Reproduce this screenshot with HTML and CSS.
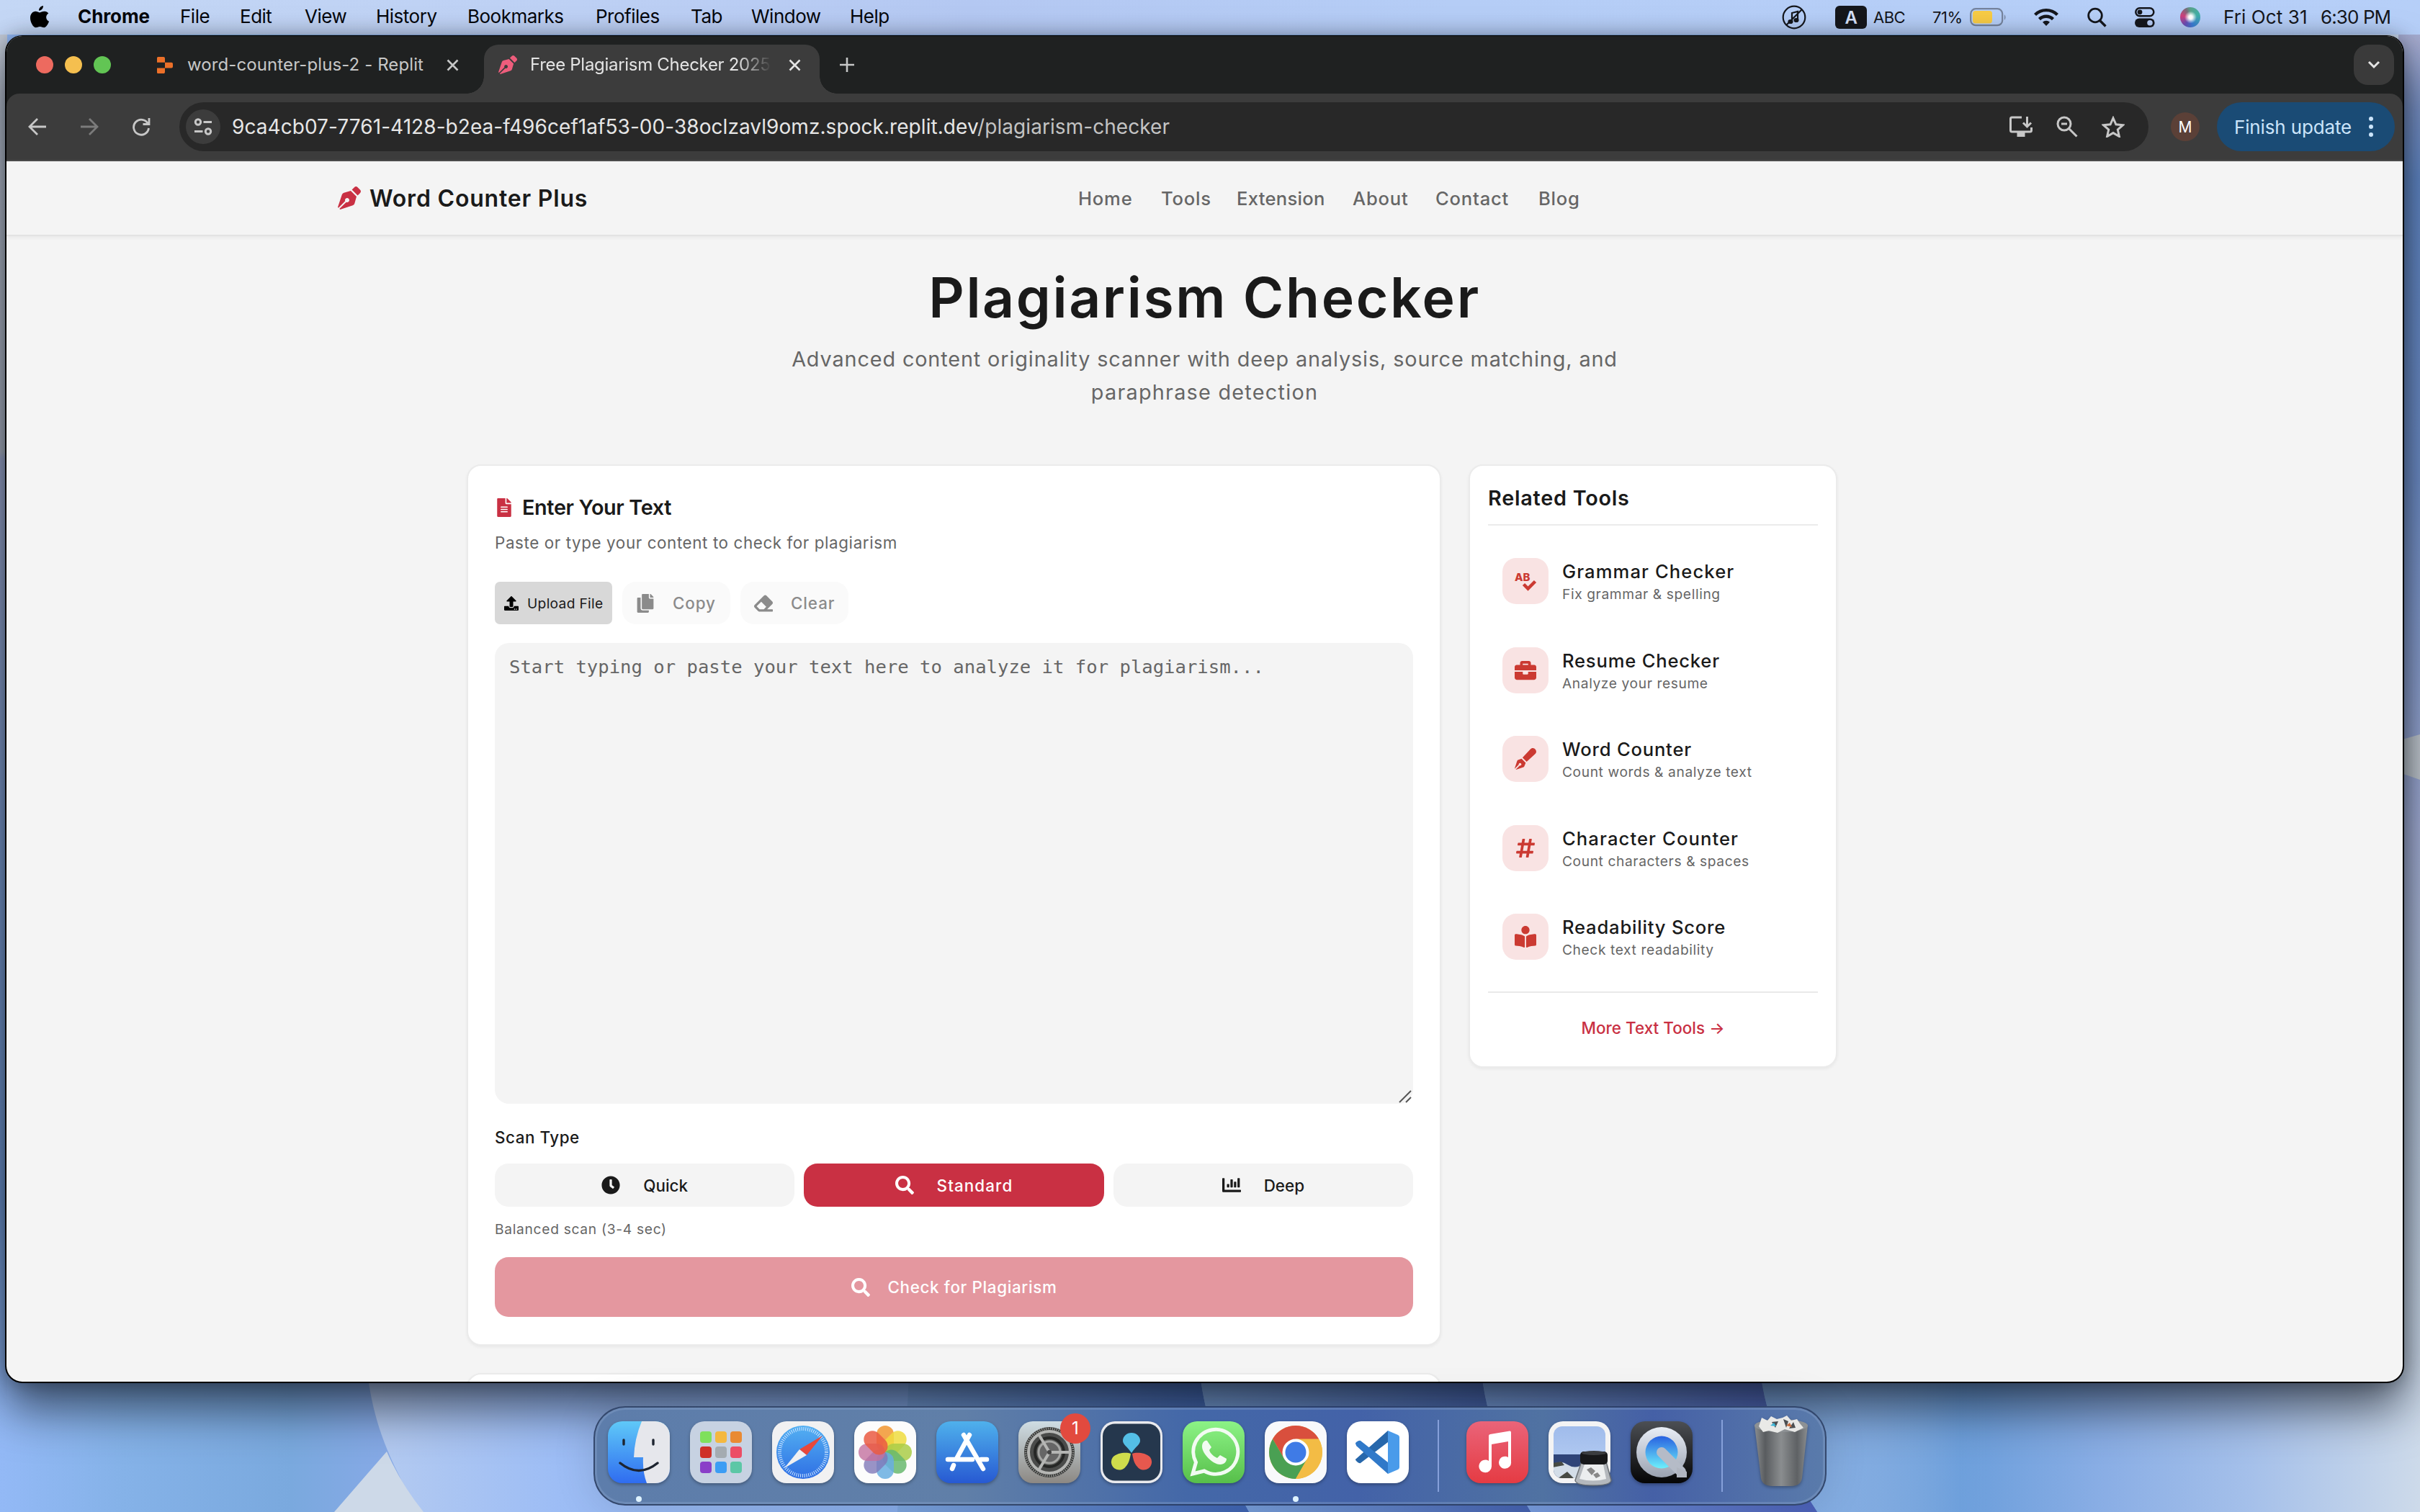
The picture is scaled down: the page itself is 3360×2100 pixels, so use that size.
FILE: index.html
```html
<!DOCTYPE html>
<html lang="en">
<head>
<meta charset="utf-8">
<title>Free Plagiarism Checker 2025</title>
<link rel="stylesheet" href="styles.css">
</head>
<body>
<svg class="defs" width="0" height="0">
<defs>
<symbol id="nib" viewBox="0 0 512 512"><path d="M136.6 138.79a64 64 0 0 0-43.31 41.35L0 460l14.69 14.69L164.8 324.58c-2.99-6.26-4.8-13.18-4.8-20.58 0-26.51 21.49-48 48-48s48 21.49 48 48-21.49 48-48 48c-7.4 0-14.32-1.81-20.58-4.8L37.31 497.31 52 512l279.86-93.29a64 64 0 0 0 41.35-43.31L416 224 288 96l-151.4 42.79zm361.34-64.62l-60.11-60.11c-18.75-18.75-49.16-18.75-67.91 0l-56.55 56.55 128.02 128.02 56.55-56.55c18.75-18.75 18.75-49.15 0-67.91z"/></symbol>
<symbol id="search" viewBox="0 0 512 512"><path d="M505 442.7L405.3 343c-4.5-4.5-10.600-7-17-7H372c27.600-35.300 44-79.700 44-128C416 93.100 322.900 0 208 0S0 93.100 0 208s93.100 208 208 208c48.300 0 92.700-16.400 128-44v16.300c0 6.400 2.500 12.500 7 17l99.700 99.700c9.400 9.400 24.600 9.400 33.900 0l28.300-28.300c9.400-9.400 9.400-24.600.1-34zM208 336c-70.700 0-128-57.200-128-128 0-70.700 57.200-128 128-128 70.700 0 128 57.200 128 128 0 70.700-57.200 128-128 128z"/></symbol>
</defs>
</svg>

<svg class="wallpaper" viewBox="0 0 3360 2100" preserveAspectRatio="none">
<defs>
<linearGradient id="wb" x1="0" x2="3360" y1="0" y2="0" gradientUnits="userSpaceOnUse">
<stop offset="0" stop-color="#93b9f6"/><stop offset=".05" stop-color="#85b2e8"/><stop offset=".12" stop-color="#7aa9de"/><stop offset=".16" stop-color="#86a9e6"/><stop offset=".76" stop-color="#86aee0"/><stop offset=".81" stop-color="#6b9edb"/><stop offset=".87" stop-color="#8aaee5"/><stop offset=".93" stop-color="#a5c0ea"/><stop offset="1" stop-color="#cddaea"/>
</linearGradient>
<linearGradient id="s1" x1="0" x2="1"><stop offset="0" stop-color="#b5cbf0"/><stop offset=".35" stop-color="#9dbdf5"/><stop offset="1" stop-color="#86abe8"/></linearGradient>
<linearGradient id="s2" x1="0" x2="1"><stop offset="0" stop-color="#7ba3dd"/><stop offset="1" stop-color="#3d62b0"/></linearGradient>
<linearGradient id="s3" x1="0" x2="1"><stop offset="0" stop-color="#7ea6de"/><stop offset="1" stop-color="#4360ae"/></linearGradient>
<linearGradient id="s4" x1="0" x2="1"><stop offset="0" stop-color="#7fa6e4"/><stop offset="1" stop-color="#4a5fb6"/></linearGradient>
<linearGradient id="s5" x1="0" x2="1"><stop offset="0" stop-color="#80aae3"/><stop offset="1" stop-color="#86aee0" stop-opacity="0"/></linearGradient>
<linearGradient id="le" x1="0" x2="0" y1="0" y2="1"><stop offset="0" stop-color="#c3cbd8"/><stop offset=".32" stop-color="#b3b9c6"/><stop offset=".325" stop-color="#a3add0"/><stop offset=".6" stop-color="#7f9fd4"/><stop offset=".85" stop-color="#6f96d0"/><stop offset="1" stop-color="#93b9f6"/></linearGradient>
<linearGradient id="re" x1="0" x2="0" y1="0" y2="1"><stop offset="0" stop-color="#a9b7e4"/><stop offset=".03" stop-color="#a3a9cd"/><stop offset=".08" stop-color="#7a93c8"/><stop offset=".13" stop-color="#6289c8"/><stop offset=".35" stop-color="#7090ca"/><stop offset=".6" stop-color="#a5b0d8"/><stop offset=".75" stop-color="#b0c0d6"/><stop offset=".93" stop-color="#c5d3e4"/><stop offset="1" stop-color="#cddaea"/></linearGradient>
</defs>
<rect width="3360" height="2100" fill="url(#wb)"/>
<rect width="10" height="1960" fill="url(#le)"/>
<rect x="3330" width="30" height="1910" fill="url(#re)"/>
<path d="M3300 1037L3360 1020V1083L3300 1062Z" fill="#c5ccd2"/>
<path d="M508 1880C512 1950 530 2020 590 2110H1265V1880Z" fill="url(#s1)"/>
<path d="M537 2016L464 2100H588Q556 2060 537 2016Z" fill="#cdd9e8"/>
<path d="M1262 1880C1262 1980 1250 2040 1245 2110H1740C1700 2040 1668 1970 1664 1880Z" fill="url(#s2)"/>
<path d="M1664 1880C1668 1970 1700 2040 1740 2110H2132C2086 2040 2060 1960 2054 1880Z" fill="url(#s3)"/>
<path d="M2054 1880C2060 1960 2086 2040 2132 2110H2530C2476 2030 2446 1960 2442 1880Z" fill="url(#s4)"/>
<path d="M2442 1880C2446 1960 2476 2030 2530 2110H2760V1880Z" fill="url(#s5)"/>
</svg>

<header class="menubar">
<nav class="menus">
<svg width="26" height="31" viewBox="0 0 26 31"><path d="M18 0c.3 3.600-2.900 6.900-5.900 6.700C11.700 3.300 14.900.3 18 0zM25.300 10.600c-4.600 2.900-3.900 9.200.7 11.100-.9 2.900-3.700 8.500-6.800 8.600-2.300 0-3-1.300-5.700-1.300s-3.600 1.300-5.700 1.300C4.200 30.300 0 22.900 0 17c0-6 3.700-9.100 7.200-9.200 2.400 0 4.300 1.600 5.900 1.600 1.500 0 3.800-1.800 6.900-1.600 2 .1 4.200 1.100 5.300 2.800z"/></svg>
<b>Chrome</b><span>File</span><span>Edit</span><span>View</span><span>History</span><span>Bookmarks</span><span>Profiles</span><span>Tab</span><span>Window</span><span>Help</span>
</nav>
<div class="status">
<svg width="34" height="34" viewBox="0 0 34 34" fill="none" stroke="#15171c" stroke-width="2.200"><circle cx="17" cy="17" r="15.300"/><path d="M14 23v-12l8-2v11M6 28L28 6"/><ellipse cx="12" cy="23" rx="2.500" ry="2" fill="#15171c"/><ellipse cx="20" cy="21" rx="2.500" ry="2" fill="#15171c"/></svg>
<span class="input-badge">A</span><span class="mini">ABC</span><span class="mini">71%</span>
<svg width="52" height="26" viewBox="0 0 52 26"><rect x="1.200" y="1.200" width="44" height="23" rx="7" fill="none" stroke="#75839c" stroke-width="2.200"/><rect x="4" y="4" width="27" height="17.500" rx="4" fill="#f7cb45"/><path d="M48 9q3 4 0 8z" fill="#75839c"/></svg>
<svg width="34" height="26" viewBox="0 0 34 26" fill="none" stroke="#15171c" stroke-width="4.400"><path d="M1.500 9.500a22 22 0 0 1 31 0M7.500 15.600a13.500 13.500 0 0 1 19 0"/><path d="M17 25l-5-5.200a7 7 0 0 1 10 0z" fill="#15171c" stroke="none"/></svg>
<svg width="27" height="28" viewBox="0 0 27 28" fill="none" stroke="#15171c" stroke-width="2.800"><circle cx="11" cy="11.500" r="9.300"/><path d="M17.500 18.500l8 8" stroke-width="3.400"/></svg>
<svg width="28" height="28" viewBox="0 0 28 28"><rect x="1.300" y="1.300" width="25" height="11" rx="5.500" fill="none" stroke="#15171c" stroke-width="2.500"/><circle cx="7" cy="6.800" r="3.400" fill="#15171c"/><rect y="15.500" width="27.600" height="12.500" rx="6.200" fill="#15171c"/><circle cx="21" cy="21.700" r="3.800" fill="#b7cdf6"/></svg>
<span class="siri"></span>
<span class="date">Fri Oct 31</span><span class="time">6:30 PM</span>
</div>
</header>

<main class="window">
<div class="tabstrip">
<div class="lights"><i></i><i></i><i></i></div>
<div class="tab">
<svg width="22" height="23" viewBox="0 0 22 23" fill="#ec7029"><path d="M0 1.500Q0 0 1.500 0H9q2 0 2 2v5.700H0zM11 7.700h9q2 0 2 2v3.700q0 2-2 2h-9zM0 15.400h11v5.700q0 2-2 2H1.500Q0 23 0 21.500z"/></svg>
<span class="tab-title">word-counter-plus-2 - Replit</span>
<svg class="x" width="17" height="17" viewBox="0 0 17 17"><path d="M1.500 1.500l14 14m0-14l-14 14"/></svg>
</div>
<div class="tab active">
<svg width="26" height="26" fill="#ee5d7c"><use href="#nib"/></svg>
<span class="tab-title fade">Free Plagiarism Checker 2025</span>
<svg class="x" width="17" height="17" viewBox="0 0 17 17"><path d="M1.500 1.500l14 14m0-14l-14 14"/></svg>
</div>
<svg class="plus" width="22" height="22" viewBox="0 0 22 22"><path d="M11 1v20M1 11h20"/></svg>
<div class="tab-search"><svg width="18" height="12" viewBox="0 0 18 12"><path d="M2 2l7 7 7-7"/></svg></div>
</div>

<div class="toolbar">
<div class="nav-buttons">
<svg width="26" height="26" viewBox="0 0 26 26"><path d="M13 2L2 13l11 11M2 13h23"/></svg>
<svg class="dim" width="26" height="26" viewBox="0 0 26 26"><path d="M13 2l11 11-11 11M24 13H1"/></svg>
<svg width="26" height="26" viewBox="0 0 26 26"><path d="M22.500 9A10.500 10.500 0 1 0 23.500 15M24 1v8.500h-8.500"/></svg>
</div>
<div class="omnibox">
<span class="site"><svg width="26" height="26" viewBox="0 0 26 26"><circle cx="6" cy="6.500" r="3.700"/><path d="M13.500 6.500H25M1 19.500h11.500"/><circle cx="20" cy="19.500" r="3.700"/></svg></span>
<span class="url">9ca4cb07-7761-4128-b2ea-f496cef1af53-00-38oclzavl9omz.spock.replit.dev<em>/plagiarism-checker</em></span>
<svg width="32" height="30" viewBox="0 0 32 30"><path d="M17 2H3.500Q1.500 2 1.500 4v16q0 2 2 2h25q2 0 2-2v-4M24.500 1v13M19 9.500l5.500 5.500 5.500-5.500"/><path d="M10.500 22h11v7h-11z" fill="#c7c7c7" stroke="none"/></svg>
<svg width="30" height="30" viewBox="0 0 30 30"><circle cx="11" cy="11" r="9"/><path d="M17.500 17.500l11 11M7 11h8"/></svg>
<svg width="32" height="30" viewBox="0 0 32 30"><path d="M16 3l3.900 8.800 9.600.9-7.200 6.400 2.100 9.400L16 23.600l-8.400 4.900 2.100-9.400-7.200-6.400 9.600-.9z"/></svg>
</div>
<span class="avatar">M</span>
<div class="update"><span>Finish update</span><i></i></div>
</div>

<div class="page">
<header class="site-header">
<div class="brand"><svg width="32" height="32"><use href="#nib"/></svg><span>Word Counter Plus</span></div>
<nav class="site-nav"><a>Home</a><a>Tools</a><a>Extension</a><a>About</a><a>Contact</a><a>Blog</a></nav>
</header>

<section class="hero">
<h1>Plagiarism Checker</h1>
<p>Advanced content originality scanner with deep analysis, source matching, and <span>paraphrase detection</span></p>
</section>

<div class="columns">
<div class="main-col">
<section class="card editor">
<h2><svg width="20" height="26" viewBox="0 0 384 512"><path d="M224 136V0H24C10.700 0 0 10.700 0 24v464c0 13.300 10.700 24 24 24h336c13.300 0 24-10.700 24-24V160H248c-13.200 0-24-10.800-24-24zm64 236c0 6.600-5.400 12-12 12H108c-6.600 0-12-5.400-12-12v-8c0-6.600 5.400-12 12-12h168c6.600 0 12 5.400 12 12v8zm0-64c0 6.600-5.400 12-12 12H108c-6.600 0-12-5.400-12-12v-8c0-6.600 5.400-12 12-12h168c6.600 0 12 5.400 12 12v8zm0-72v8c0 6.600-5.400 12-12 12H108c-6.600 0-12-5.400-12-12v-8c0-6.600 5.400-12 12-12h168c6.600 0 12 5.400 12 12zm96-114.100v6.100H256V0h6.100c6.400 0 12.500 2.500 17 7l97.900 98c4.500 4.500 7 10.600 7 16.900z"/></svg>Enter Your Text</h2>
<p class="desc">Paste or type your content to check for plagiarism</p>
<div class="actions">
<button class="upload"><svg width="20" height="20" viewBox="0 0 512 512"><path d="M296 384h-80c-13.300 0-24-10.700-24-24V192h-87.700c-17.800 0-26.700-21.500-14.100-34.100L242.300 5.700c7.500-7.500 19.800-7.500 27.300 0l152.200 152.200c12.600 12.600 3.700 34.100-14.100 34.100H320v168c0 13.300-10.700 24-24 24zm216-8v112c0 13.300-10.700 24-24 24H24c-13.300 0-24-10.700-24-24V376c0-13.300 10.700-24 24-24h136v8c0 30.900 25.100 56 56 56h80c30.900 0 56-25.100 56-56v-8h136c13.300 0 24 10.700 24 24zm-124 88c0-11-9-20-20-20s-20 9-20 20 9 20 20 20 20-9 20-20zm64 0c0-11-9-20-20-20s-20 9-20 20 9 20 20 20 20-9 20-20z"/></svg>Upload File</button>
<button class="ghost"><svg width="26" height="26" viewBox="0 0 448 512"><path d="M320 448v40c0 13.255-10.745 24-24 24H24c-13.255 0-24-10.745-24-24V120c0-13.255 10.745-24 24-24h72v296c0 30.879 25.121 56 56 56h168zm0-344V0H152c-13.255 0-24 10.745-24 24v368c0 13.255 10.745 24 24 24h272c13.255 0 24-10.745 24-24V128H344c-13.200 0-24-10.800-24-24zm120.971-31.029L375.029 7.029A24 24 0 0 0 358.059 0H352v96h96v-6.059a24 24 0 0 0-7.029-16.970z"/></svg>Copy</button>
<button class="ghost"><svg width="26" height="26" viewBox="0 0 512 512"><path d="M497.941 273.941c18.745-18.745 18.745-49.137 0-67.882l-160-160c-18.745-18.745-49.136-18.746-67.883 0l-256 256c-18.745 18.745-18.745 49.137 0 67.882l96 96A48 48 0 0 0 144 480h356c6.627 0 12-5.373 12-12v-40c0-6.627-5.373-12-12-12H355.883l142.058-142.059zm-302.627-62.627l137.373 137.373L265.373 416H150.628l-80-80 124.686-124.686z"/></svg>Clear</button>
</div>
<div class="textarea">Start typing or paste your text here to analyze it for plagiarism...
<svg class="grip" width="18" height="18" viewBox="0 0 18 18"><path d="M1 17L17 1M10 17l7-7"/></svg></div>
<div class="label">Scan Type</div>
<div class="scan">
<button><svg width="26" height="26" viewBox="0 0 512 512"><path d="M256,8C119,8,8,119,8,256S119,504,256,504,504,393,504,256,393,8,256,8Zm92.490,313h0l-20,25a16,16,0,0,1-22.490,2.500h0l-67-49.720a40,40,0,0,1-15-31.230V112a16,16,0,0,1,16-16h32a16,16,0,0,1,16,16V256l58,42.500A16,16,0,0,1,348.490,321Z"/></svg>Quick</button>
<button class="on"><svg width="26" height="26"><use href="#search"/></svg>Standard</button>
<button><svg width="26" height="26" viewBox="0 0 512 512"><path d="M332.800 320h38.400c6.400 0 12.800-6.400 12.800-12.800V172.800c0-6.400-6.400-12.800-12.800-12.800h-38.400c-6.400 0-12.800 6.400-12.800 12.800v134.400c0 6.400 6.400 12.800 12.800 12.800zm96 0h38.400c6.400 0 12.800-6.400 12.800-12.800V76.800c0-6.400-6.400-12.800-12.800-12.800h-38.400c-6.400 0-12.800 6.400-12.800 12.800v230.400c0 6.400 6.400 12.800 12.800 12.800zm-288 0h38.400c6.400 0 12.800-6.400 12.800-12.800v-70.400c0-6.400-6.400-12.800-12.800-12.800h-38.400c-6.400 0-12.800 6.400-12.800 12.800v70.400c0 6.400 6.400 12.800 12.800 12.800zm96 0h38.400c6.400 0 12.800-6.400 12.800-12.800V108.800c0-6.400-6.400-12.800-12.800-12.800h-38.400c-6.400 0-12.800 6.400-12.800 12.800v198.400c0 6.400 6.400 12.800 12.800 12.800zM496 384H64V80c0-8.840-7.160-16-16-16H16C7.160 64 0 71.160 0 80v336c0 17.670 14.330 32 32 32h464c8.840 0 16-7.160 16-16v-32c0-8.840-7.160-16-16-16z"/></svg>Deep</button>
</div>
<p class="hint">Balanced scan (3-4 sec)</p>
<button class="check"><svg width="26" height="26"><use href="#search"/></svg>Check for Plagiarism</button>
</section>
<section class="card next"></section>
</div>

<aside class="card related">
<h3>Related Tools</h3>
<ul>
<li><span class="tile"><svg width="30" height="30" viewBox="0 0 30 30"><text x="0" y="15">AB</text><path d="M12.500 19.500l6 6 10-10" fill="none" stroke="#cb3a32" stroke-width="4.500"/></svg></span><div><b class="wide">Grammar Checker</b><small>Fix grammar &amp; spelling</small></div></li>
<li><span class="tile"><svg width="30" height="30" viewBox="0 0 512 512"><path d="M320 336c0 8.840-7.160 16-16 16h-96c-8.840 0-16-7.160-16-16v-48H0v144c0 25.600 22.400 48 48 48h416c25.600 0 48-22.400 48-48V288H320v48zm144-208h-80V80c0-25.600-22.400-48-48-48H176c-25.600 0-48 22.400-48 48v48H48c-25.600 0-48 22.400-48 48v80h512v-80c0-25.600-22.400-48-48-48zm-144 0H192V96h128v32z"/></svg></span><div><b>Resume Checker</b><small>Analyze your resume</small></div></li>
<li><span class="tile"><svg width="30" height="30" viewBox="0 0 512 512"><path d="M79.180 282.940a32 32 0 0 0-20.240 20.240L0 480l4.690 4.690 92.890-92.890c-.66-2.560-1.570-5.030-1.570-7.800 0-17.670 14.330-32 32-32s32 14.330 32 32-14.330 32-32 32c-2.770 0-5.240-.91-7.800-1.570l-92.890 92.890L32 512l176.820-58.940a32 32 0 0 0 20.240-20.240l33.070-84.070-98.880-98.880-84.070 33.070zM369.250 28.320L186.140 227.810l97.850 97.850 199.490-183.110C568.400 67.480 443.730-55.940 369.250 28.320z"/></svg></span><div><b>Word Counter</b><small>Count words &amp; analyze text</small></div></li>
<li><span class="tile"><svg width="26" height="30" viewBox="0 0 448 512"><path d="M440.667 182.109l7.143-40c1.313-7.355-4.342-14.109-11.813-14.109h-74.810l14.623-81.891C377.123 38.754 371.468 32 363.997 32h-40.632a12 12 0 0 0-11.813 9.891L296.175 128H197.540l14.623-81.891C213.477 38.754 207.822 32 200.350 32h-40.632a12 12 0 0 0-11.813 9.891L132.528 128H53.432a12 12 0 0 0-11.813 9.891l-7.143 40C33.163 185.246 38.818 192 46.289 192h74.810L98.242 320H19.146a12 12 0 0 0-11.813 9.891l-7.143 40C-1.123 377.246 4.532 384 12.003 384h74.810L72.190 465.891C70.877 473.246 76.532 480 84.003 480h40.632a12 12 0 0 0 11.813-9.891L151.826 384h98.634l-14.623 81.891C234.523 473.246 240.178 480 247.650 480h40.632a12 12 0 0 0 11.813-9.891L315.472 384h79.096a12 12 0 0 0 11.813-9.891l7.143-40c1.313-7.355-4.342-14.109-11.813-14.109h-74.810l22.857-128h79.096a12 12 0 0 0 11.813-9.891zM261.889 320h-98.634l22.857-128h98.634l-22.857 128z"/></svg></span><div><b class="wide">Character Counter</b><small>Count characters &amp; spaces</small></div></li>
<li><span class="tile"><svg width="30" height="30" viewBox="0 0 512 512"><path d="M352 96c0-53.020-42.980-96-96-96s-96 42.980-96 96 42.980 96 96 96 96-42.980 96-96zM233.590 241.100c-59.330-36.320-155.430-46.300-203.790-49.050C13.550 191.130 0 203.510 0 219.140v222.800c0 14.330 11.590 26.280 26.490 27.050 43.660 2.290 131.990 10.680 193.040 41.430 9.370 4.720 20.480-1.710 20.480-11.870V252.560c-.01-4.670-2.320-8.950-6.420-11.460zm248.610-49.050c-48.350 2.740-144.460 12.730-203.780 49.050-4.100 2.510-6.410 6.960-6.410 11.630v245.790c0 10.190 11.140 16.630 20.540 11.900 61.040-30.720 149.320-39.110 192.970-41.400 14.900-.78 26.490-12.730 26.490-27.060V219.140c-.01-15.630-13.560-28.010-29.810-27.090z"/></svg></span><div><b>Readability Score</b><small>Check text readability</small></div></li>
</ul>
<a class="more">More Text Tools →</a>
</aside>
</div>
</div>
</main>

<footer class="dock">
<svg viewBox="0 0 86 86"><defs><linearGradient id="f1" x1="0" x2="0" y1="0" y2="1"><stop offset="0" stop-color="#5fc9f8"/><stop offset="1" stop-color="#2f6cf0"/></linearGradient><clipPath id="rr"><rect width="86" height="86" rx="20"/></clipPath></defs><g clip-path="url(#rr)"><rect width="86" height="86" fill="url(#f1)"/><path d="M47 0Q37 24 36 50H49Q48 70 54 86H86V0Z" fill="#e6e7ec"/></g><path d="M22 26v6M63 26v6M17 58Q43 79 69 58" fill="none" stroke="#1d2430" stroke-width="3.400" stroke-linecap="round"/></svg>
<svg viewBox="0 0 86 86"><rect width="86" height="86" rx="20" fill="#c7d2e2"/><g><rect x="14" y="14" width="16" height="16" rx="4" fill="#7fe05c"/><rect x="35" y="14" width="16" height="16" rx="4" fill="#f4b840"/><rect x="56" y="14" width="16" height="16" rx="4" fill="#e98a33"/><rect x="14" y="35" width="16" height="16" rx="4" fill="#cf3028"/><rect x="35" y="35" width="16" height="16" rx="4" fill="#a4abb1"/><rect x="56" y="35" width="16" height="16" rx="4" fill="#ec4d65"/><rect x="14" y="56" width="16" height="16" rx="4" fill="#8a3fc8"/><rect x="35" y="56" width="16" height="16" rx="4" fill="#3c9df4"/><rect x="56" y="56" width="16" height="16" rx="4" fill="#5cc7a6"/></g></svg>
<svg viewBox="0 0 86 86"><defs><linearGradient id="sf" x1="0" x2="0" y1="0" y2="1"><stop offset="0" stop-color="#53b0f2"/><stop offset="1" stop-color="#2f6fe4"/></linearGradient></defs><rect width="86" height="86" rx="20" fill="#f1f1f2"/><circle cx="43" cy="43" r="37" fill="url(#sf)"/><circle cx="43" cy="43" r="32.500" fill="none" stroke="#cfe6ff" stroke-width="5" stroke-dasharray="1 1.840"/><path d="M70 20L48 47 38 39Z" fill="#e8483b"/><path d="M17 65L38 39 48 47Z" fill="#f0f0f2"/></svg>
<svg viewBox="0 0 86 86"><rect width="86" height="86" rx="20" fill="#fcfcfc"/><g><rect x="31" y="6" width="24" height="37" rx="12" fill="#f19a37" fill-opacity=".88"/><rect x="31" y="6" width="24" height="37" rx="12" fill="#efdc3f" fill-opacity=".85" transform="rotate(45 43 43)"/><rect x="31" y="6" width="24" height="37" rx="12" fill="#aacd48" fill-opacity=".85" transform="rotate(90 43 43)"/><rect x="31" y="6" width="24" height="37" rx="12" fill="#68b96f" fill-opacity=".85" transform="rotate(135 43 43)"/><rect x="31" y="6" width="24" height="37" rx="12" fill="#68aee0" fill-opacity=".85" transform="rotate(180 43 43)"/><rect x="31" y="6" width="24" height="37" rx="12" fill="#8078b8" fill-opacity=".8" transform="rotate(225 43 43)"/><rect x="31" y="6" width="24" height="37" rx="12" fill="#c3719f" fill-opacity=".8" transform="rotate(270 43 43)"/><rect x="31" y="6" width="24" height="37" rx="12" fill="#ea5b42" fill-opacity=".85" transform="rotate(315 43 43)"/></g></svg>
<svg viewBox="0 0 86 86"><defs><linearGradient id="as" x1="0" x2="0" y1="0" y2="1"><stop offset="0" stop-color="#4fb1ec"/><stop offset="1" stop-color="#2759d2"/></linearGradient></defs><rect width="86" height="86" rx="20" fill="url(#as)"/><path d="M46 19L28 52M38 19L65 66M24 61L22 66M16 53H50M62 53H70" stroke="#fff" stroke-width="6.500" stroke-linecap="round"/></svg>
<span class="badged"><svg viewBox="0 0 86 86"><defs><linearGradient id="st" x1="0" x2="0" y1="0" y2="1"><stop offset="0" stop-color="#cfdde4"/><stop offset="1" stop-color="#8c8883"/></linearGradient></defs><rect width="86" height="86" rx="20" fill="url(#st)"/><circle cx="43" cy="43" r="35" fill="#2f302f"/><circle cx="43" cy="43" r="33" fill="none" stroke="#8f908e" stroke-width="3" stroke-dasharray="1.500 1.500"/><circle cx="43" cy="43" r="29" fill="#4a4b4a" stroke="#b5b6b4" stroke-width="4"/><circle cx="43" cy="43" r="20" fill="#5a5b59" stroke="#262726" stroke-width="4"/><circle cx="43" cy="43" r="15" fill="#666" stroke="#a5a6a4" stroke-width="3"/><path d="M43 43h28M43 43L28 18M43 43L28 68" stroke="#b5b6b4" stroke-width="4"/><circle cx="43" cy="43" r="3" fill="#444"/></svg><em>1</em></span>
<svg viewBox="0 0 86 86"><rect width="86" height="86" rx="20" fill="#e9eaee"/><rect x="3" y="3.500" width="80" height="79" rx="17" fill="#25374d"/><path d="M43 44C36 34 31 32 31 27a12 11 0 0 1 24 0C55 32 50 34 43 44Z" fill="#54bfe6"/><path d="M42 45C37 43 24 43 17 50a11 11 0 1 0 18 13C40 58 41 50 42 45Z" fill="#cfdc4c"/><path d="M44 45C49 43 62 43 69 50a11 11 0 1 1-18 13C46 58 45 50 44 45Z" fill="#e6584e"/></svg>
<svg viewBox="0 0 86 86"><defs><linearGradient id="wa" x1="0" x2="0" y1="0" y2="1"><stop offset="0" stop-color="#8cf386"/><stop offset="1" stop-color="#57bf4a"/></linearGradient></defs><rect width="86" height="86" rx="20" fill="url(#wa)"/><path d="M14 73l4.500-16A31 31 0 1 1 30 69Z" fill="none" stroke="#f2fbf2" stroke-width="5"/><path d="M34 27c-2-1-7 1-7 8 0 10 15 25 25 25 6 0 9-4 9-8l-9-5-4 4c-5-2-10-7-11-11l3-4z" fill="#f2fbf2"/></svg>
<svg viewBox="0 0 86 86"><rect width="86" height="86" rx="20" fill="#f8f9fb"/><circle cx="43" cy="43" r="37" fill="#f3bc45"/><path d="M43 43L75 24.500A37 37 0 0 0 11 24.500L27 52Z" fill="#d94f3d"/><path d="M11 24.500A37 37 0 0 0 43 80L59 52 43 43 27 52Z" fill="#4aa053"/><path d="M43 24.500H75A37 37 0 0 1 43 80L59 52Z" fill="#f3bc45"/><circle cx="43" cy="43" r="18.500" fill="#fff"/><circle cx="43" cy="43" r="14.500" fill="#3f7be6"/></svg>
<svg viewBox="0 0 86 86"><rect width="86" height="86" rx="20" fill="#fff"/><path d="M13 52L57 13V29L19 58Q17 59 13 55Q11 53 13 52Z" fill="#2767ab"/><path d="M13 33Q11 31 13 29Q17 26 19 27L57 57V73L13 34Z" fill="#3079c9"/><path d="M57 13L71 19Q73 20 73 22V64Q73 66 71 67L57 73Z" fill="#4a9bea"/></svg>
<hr>
<svg viewBox="0 0 86 86"><defs><linearGradient id="mu" x1="0" x2="0" y1="0" y2="1"><stop offset="0" stop-color="#ea6479"/><stop offset="1" stop-color="#e53b43"/></linearGradient></defs><rect width="86" height="86" rx="20" fill="url(#mu)"/><path d="M31 20Q31 18.500 33 18L60 13.500Q62 13.200 62 15.500V56A8.500 8.500 0 1 1 58 50V28L35 32V62A8.800 8.800 0 1 1 31 55Z" fill="#fff"/></svg>
<svg viewBox="0 0 86 90" class="tall"><defs><linearGradient id="sky" x1="0" x2="0" y1="0" y2="1"><stop offset="0" stop-color="#9db9ea"/><stop offset="1" stop-color="#aec7f0"/></linearGradient><clipPath id="pv"><rect x="7" y="7" width="72" height="72" rx="12"/></clipPath></defs><rect width="86" height="86" rx="20" fill="#f3f3f4"/><g clip-path="url(#pv)"><rect width="86" height="46" fill="url(#sky)"/><rect y="46" width="86" height="40" fill="#2f4478"/><path d="M0 64Q14 52 26 60T50 58 86 62V86H0Z" fill="#d3dde8"/><path d="M6 58l12-2 4 5-16 3zM12 80l14-10 10 10z" fill="#474a44"/></g><path d="M46 56H80L87 82Q86 89 62 89T37 82Z" fill="#b4b8bd" stroke="#6d7277" stroke-width="1.500"/><path d="M50 60H76L80 80Q62 85 43 80Z" fill="#eceeef"/><path d="M53 67l6-3 6 5-5 6zM62 74l6-3 4 5-6 3z" fill="#888"/><rect x="44" y="42" width="38" height="18" rx="5" fill="#17181a"/><ellipse cx="63" cy="44" rx="17" ry="3" fill="#3b3d40"/></svg>
<svg viewBox="0 0 86 86"><defs><linearGradient id="qt" x1="0" x2="0" y1="0" y2="1"><stop offset="0" stop-color="#4c4f54"/><stop offset="1" stop-color="#050505"/></linearGradient><linearGradient id="qr" x1="0" x2="0" y1="0" y2="1"><stop offset="0" stop-color="#e9eef6"/><stop offset="1" stop-color="#9aa2b0"/></linearGradient><linearGradient id="qb" x1="0" x2="0" y1="0" y2="1"><stop offset="0" stop-color="#2860e0"/><stop offset="1" stop-color="#6df0fb"/></linearGradient></defs><rect width="86" height="86" rx="20" fill="url(#qt)"/><circle cx="43" cy="43" r="35" fill="url(#qr)"/><circle cx="43" cy="43" r="22.500" fill="url(#qb)"/><path d="M43 43L70 70" stroke="#b5bbc7" stroke-width="14" stroke-linecap="round"/><path d="M64 64L78 70V78H64Z" fill="#b0b5bf"/></svg>
<hr>
<svg viewBox="0 0 86 100" class="trash"><defs><linearGradient id="tr" x1="0" x2="1"><stop offset="0" stop-color="#8b8e90"/><stop offset=".2" stop-color="#595c5f"/><stop offset=".5" stop-color="#8a8d8f"/><stop offset=".8" stop-color="#5e6164"/><stop offset="1" stop-color="#8b8e90"/></linearGradient></defs><path d="M6 14H80L72 88Q70 99 57 99H31Q17 99 15 88Z" fill="url(#tr)"/><ellipse cx="43" cy="15" rx="37" ry="9" fill="#8d9194"/><path d="M12 16l4-12 8 4 5-6 8 4 8-2 6-3 6 7 8-2 4 6 5 6-12 6-14-4-10 5-12-3-8 2z" fill="#e9e9e7"/><path d="M30 10l5 8 4-9zM46 6l4 12 3-9zM60 10l-6 9 9-1z" fill="#4c4f52"/><path d="M28 15l5-4 3 5z" fill="#3fb7d8"/><path d="M50 15l5-4 3 6z" fill="#c46a3c"/></svg>
</footer>
</body>
</html>
```
FILE: styles.css
```css
* { box-sizing: border-box; margin: 0; padding: 0; }
body { width: 3360px; height: 2100px; overflow: hidden; position: relative; font-family: Inter, "Liberation Sans", sans-serif; background: #86aee0; }
.defs { position: absolute; }
svg { display: block; flex: none; }
button { font: inherit; border: 0; color: inherit; }

.wallpaper { position: absolute; inset: 0; width: 3360px; height: 2100px; }

/* Menu bar */
.menubar { position: relative; height: 48px; display: flex; justify-content: space-between; background: linear-gradient(90deg, #c4d7f5, #bdd0f4 24%, #b4c8f2 40%, #b5cdf6 60%, #b6cff8); font-size: 26px; line-height: 46px; color: #05070c; letter-spacing: -.5px; white-space: nowrap; }
.menus { display: grid; grid-template-columns: 66px 142px 83px 90px 99px 127px 178px 132px 84px 137px 80px; padding-left: 42px; }
.menus svg { margin-top: 8px; }
.menus b { font-weight: 700; letter-spacing: -.1px; }
.status { display: grid; grid-template-columns: 74px 53px 82px 52px 89px 74px 66px 63px 60px 135px 138px; align-items: center; height: 48px; color: #15171c; }
.status .mini { font-size: 22px; }
.status .time { letter-spacing: -.9px; }
.status .date { letter-spacing: .1px; }
.input-badge { width: 44px; height: 32px; border-radius: 6px; background: #15171c; color: #d5e1f9; font-weight: 600; font-size: 24px; line-height: 33px; text-align: center; }
.siri { width: 28px; height: 28px; border-radius: 50%; background: radial-gradient(circle at 52% 50%, #fff 0 12%, rgba(255,255,255,0) 42%), conic-gradient(#5aa28a, #3fb0a8 20%, #3b7fd8 45%, #6a50b8 60%, #d1407c 78%, #7a6a7a 92%, #5aa28a); }

/* Browser window */
.window { position: absolute; left: 7px; top: 49px; width: 3331px; height: 1872px; border: 2px solid #000; border-top-width: 1px; border-radius: 24px; overflow: hidden; background: #f4f4f4; box-shadow: 0 36px 64px rgba(10,15,25,.62), 0 0 26px rgba(20,25,35,.35); }
.window::after { content: ""; position: absolute; inset: 0; border-top: 2px solid rgba(140,140,140,.7); border-radius: 22px 22px 0 0; height: 40px; }
.tabstrip { height: 80px; background: #1f2121; display: flex; align-items: center; padding: 0 12px 0 0; position: relative; z-index: 1; }
.lights { display: flex; gap: 16px; margin-left: 41px; width: 168px; }
.lights i { width: 24px; height: 24px; border-radius: 50%; background: #ed6a5f; }
.lights i:nth-child(2) { background: #f5bf4f; }
.lights i:nth-child(3) { background: #62c554; }
.tab { display: flex; align-items: center; height: 68px; align-self: flex-end; padding-bottom: 12px; width: 454px; }
.tab-title { font-size: 24px; line-height: 32px; white-space: nowrap; color: #c6c7c7; margin-left: 20px; width: 360px; letter-spacing: .1px; }
.tab .x { stroke: #c6c7c7; stroke-width: 2.6; }
.tab.active { width: 466px; background: #3c3c3c; border-radius: 20px 20px 0 0; padding-left: 20px; position: relative; }
.tab.active::before, .tab.active::after { content: ""; position: absolute; bottom: 0; width: 24px; height: 24px; }
.tab.active::before { left: -24px; background: radial-gradient(circle at 0 0, transparent 23.5px, #3c3c3c 24px); }
.tab.active::after { right: -24px; background: radial-gradient(circle at 100% 0, transparent 23.5px, #3c3c3c 24px); }
.tab.active .tab-title { color: #e4e4e4; margin-left: 18px; width: 335px; letter-spacing: -.3px; overflow: hidden; -webkit-mask-image: linear-gradient(90deg, #000 86%, transparent 100%); mask-image: linear-gradient(90deg, #000 86%, transparent 100%); }
.tab.active .x { margin-left: 24px; stroke: #e4e4e4; }
.plus { margin-left: 27px; stroke: #c6c7c7; stroke-width: 2.6; }
.tab-search { margin-left: auto; width: 56px; height: 56px; border-radius: 20px; background: #3a3a3a; display: grid; place-items: center; }
.tab-search svg { fill: none; stroke: #e4e4e4; stroke-width: 3; }

.toolbar { height: 94px; background: #3c3c3c; border-bottom: 2px solid #4a4a4a; display: flex; align-items: center; padding-right: 11px; border-radius: 18px 18px 0 0; box-shadow: 0 -20px 0 #1f2121; position: relative; z-index: 0; }
.nav-buttons { display: flex; gap: 46px; padding-left: 30px; width: 240px; fill: none; stroke: #c7c7c7; stroke-width: 2.8; }
.nav-buttons .dim { stroke: #7b7b7b; }
.omnibox { display: flex; align-items: center; width: 2734px; height: 68px; border-radius: 34px; background: #282828; padding: 0 33px 0 9px; fill: none; stroke: #c7c7c7; stroke-width: 3; }
.site { width: 48px; height: 48px; border-radius: 50%; background: #3c3c3c; display: grid; place-items: center; }
.url { flex: 1; margin-left: 16px; font-size: 28px; letter-spacing: .06px; color: #e6e6e6; white-space: nowrap; line-height: 40px; }
.url em { font-style: normal; color: #c3c3c3; }
.omnibox > svg + svg { margin-left: 33px; }
.avatar { margin-left: 31px; width: 40px; height: 40px; border-radius: 50%; background: #5b4037; color: #fff; font-size: 21px; line-height: 41px; text-align: center; }
.update { margin-left: 24px; flex: 1; height: 68px; border-radius: 34px; background: #1a4b75; color: #cbe4fa; font-size: 26px; line-height: 69px; letter-spacing: -.15px; padding-left: 24px; display: flex; align-items: center; white-space: nowrap; }
.update i { width: 6px; height: 6px; border-radius: 50%; background: #cbe4fa; margin-left: 24px; box-shadow: 0 -11px #cbe4fa, 0 11px #cbe4fa; }

/* Page */
.page { color: #1a1a1a; height: 1700px; }
.site-header { height: 104px; border-bottom: 2px solid #e3e3e3; box-shadow: 0 2px 5px rgba(0,0,0,.05); display: flex; align-items: center; padding: 0 0 0 460px; }
.brand { display: flex; align-items: center; gap: 12px; width: 1028px; fill: #c93043; font-size: 32px; font-weight: 600; letter-spacing: .8px; }
.site-nav { display: grid; grid-template-columns: 115px 105px 161px 115px 143px 60px; font-size: 25.6px; font-weight: 500; color: #666; letter-spacing: .8px; }
.site-nav a:nth-child(3) { letter-spacing: .3px; }
.hero { padding: 40px 0 77px 0; width: 3327px; text-align: center; }
.hero h1 { font-size: 76.8px; line-height: 92px; font-weight: 600; letter-spacing: 2.6px; }
.hero p { font-size: 28.8px; line-height: 46px; color: #666; letter-spacing: .88px; width: 1160px; margin: 16px auto 0; }
.hero p span { letter-spacing: 1.25px; }

.columns { display: flex; align-items: flex-start; gap: 38px; padding-left: 639px; }
.card { background: #fff; border: 2px solid #ebebeb; border-radius: 20px; box-shadow: 0 2px 4px rgba(0,0,0,.05); }
.editor { width: 1353px; height: 1224px; padding: 37px; }
.editor h2 { display: flex; align-items: center; gap: 15px; padding-left: 3px; fill: #c93043; font-size: 28.8px; line-height: 42px; font-weight: 600; letter-spacing: -.35px; }
.desc { margin-top: 10px; font-size: 22.4px; line-height: 36px; color: #666; letter-spacing: .6px; }
.actions { display: flex; gap: 14px; margin-top: 36px; height: 59px; font-size: 22.4px; font-weight: 500; }
.actions button { display: flex; align-items: center; white-space: nowrap; }
.actions .upload { width: 163px; padding-left: 13px; gap: 12px; font-size: 19.2px; font-weight: 400; letter-spacing: .3px; border-radius: 7px; background: #d8d8d8; color: #1a1a1a; }
.actions .ghost { width: 150px; padding-left: 19px; gap: 25px; letter-spacing: .9px; border-radius: 19px; background: #fafafa; color: #8b8b8b; fill: #8b8b8b; }
.textarea { position: relative; margin-top: 26px; height: 640px; border-radius: 20px; background: #f4f4f4; padding: 15px 20px; font: 25.6px/36px "DejaVu Sans Mono", monospace; color: #666; white-space: nowrap; }
.grip { position: absolute; right: 2px; bottom: 1px; stroke: #555; stroke-width: 2; }
.label { margin-top: 30px; font-size: 22.4px; line-height: 33px; font-weight: 500; letter-spacing: .55px; }
.scan { margin-top: 20px; display: grid; grid-template-columns: repeat(3, 1fr); gap: 13px; height: 60px; font-size: 22.4px; font-weight: 500; letter-spacing: .6px; }
.scan button { display: flex; align-items: center; justify-content: center; gap: 32px; border-radius: 19px; background: #f4f4f4; fill: #1a1a1a; }
.scan .on { background: #c93043; color: #fff; fill: #fff; letter-spacing: 1.1px; }
.hint { margin-top: 17px; font-size: 19.2px; line-height: 29px; color: #666; letter-spacing: .7px; }
.check { width: 100%; margin-top: 24px; height: 83px; display: flex; align-items: center; justify-content: center; gap: 25px; border-radius: 19px; background: #e4979f; color: #fff; fill: #fff; font-size: 22.4px; font-weight: 500; letter-spacing: .65px; }
.next { margin-top: 38px; height: 200px; }

.related { width: 512px; height: 838px; padding: 24px 25px; }
.related h3 { font-size: 28.8px; line-height: 42px; font-weight: 600; letter-spacing: .75px; padding: 0 0 15px 0; border-bottom: 2px solid #ebebeb; }
.related ul { list-style: none; padding: 26px 0 25px; border-bottom: 2px solid #e9e9e9; display: grid; gap: 21.5px; }
.related li { display: flex; align-items: center; gap: 19px; height: 102px; padding-left: 20px; }
.tile { width: 64px; height: 64px; border-radius: 19px; background: #f9e3e3; display: grid; place-items: center; fill: #cb3a32; }
.tile svg { overflow: visible; }
.tile text { font-weight: 800; font-size: 15px; }
.related li div { padding-top: 2px; }
.related b { display: block; font-size: 25.6px; line-height: 34px; font-weight: 500; letter-spacing: .8px; }
.related b.wide { letter-spacing: 1.1px; }
.related small { display: block; font-size: 19.2px; line-height: 28px; color: #666; letter-spacing: .6px; }
.more { display: block; margin-top: 31px; text-align: center; font-size: 22.4px; line-height: 36px; font-weight: 500; letter-spacing: .05px; color: #c93043; }

/* Dock */
.dock { position: absolute; left: 824px; top: 1953px; width: 1712px; height: 138px; border: 2px solid rgba(30,45,75,.65); border-radius: 44px; background: linear-gradient(90deg, #5d7dab, #607fa8 30%, #4468a8 48%, #4362a8 62%, #5072a2 77%, #4560a6 86%, #5a7bab); box-shadow: inset 0 0 0 3px rgba(140,165,205,.35), 0 0 60px rgba(0,0,0,.12); display: flex; align-items: flex-start; padding: 19px 0 0 18px; gap: 28px; }
.dock > svg, .badged svg { width: 86px; height: 86px; filter: drop-shadow(0 2px 2px rgba(0,0,0,.3)); overflow: visible; }
.dock > svg.tall { height: 90px; }
.dock > svg.trash { height: 100px; margin-top: -9px; }
.dock hr { border: 0; width: 2px; height: 100px; margin: -2px 10px 0 12px; background: #86a0da; }
.badged { position: relative; }
.badged em { position: absolute; right: -14px; top: -11px; width: 42px; height: 42px; border-radius: 50%; background: #e24a3e; color: #fff; font-style: normal; font-size: 24px; line-height: 42px; text-align: center; }
.dock::before, .dock::after { content: ""; position: absolute; top: 123px; width: 8px; height: 8px; border-radius: 50%; background: #dff3ff; }
.dock::before { left: 57px; }
.dock::after { left: 969px; }
```
